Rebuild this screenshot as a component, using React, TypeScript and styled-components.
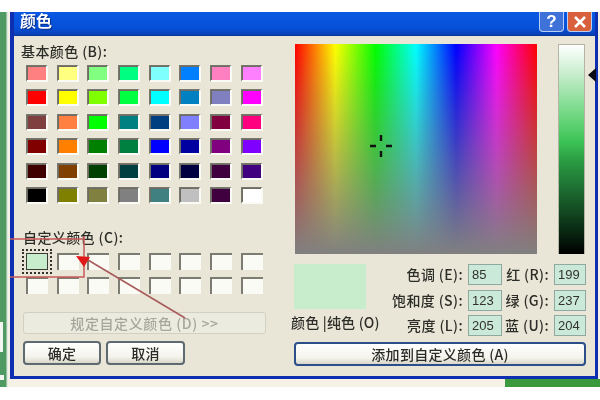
import React from 'react';
import styled, { createGlobalStyle } from 'styled-components';

const GlobalStyle = createGlobalStyle`
  html, body {
    margin: 0;
    padding: 0;
    background: #fff;
    overflow: hidden;
  }
  body {
    font-family: "Noto Sans CJK SC", "Liberation Sans", sans-serif;
  }
`;

const Page = styled.div`
  position: relative;
  width: 600px;
  height: 400px;
  padding-top: 12px;
  box-sizing: border-box;
  display: flex;
  align-items: flex-start;
  background: #fff;
  filter: blur(0.45px);
`;

const GreenStrip = styled.div`
  width: 8px;
  height: 375px;
  background:
    linear-gradient(#f2f5f0, #f2f5f0) 0 310px / 3px 30px no-repeat,
    linear-gradient(#f2f5f0, #f2f5f0) 0 363px / 4px 5px no-repeat,
    linear-gradient(90deg, #4f9a63 0 6px, #dfe8dc 7px);
`;

const Desktop = styled.div`
  width: 592px;
  height: 375px;
  display: flex;
  flex-direction: column;
  background: #f5f1e6;
`;

const Win = styled.div`
  width: 588px;
  height: 367px;
  margin-left: 2px;
  box-sizing: border-box;
  display: flex;
  flex-direction: column;
  border: solid #0e2fb0;
  border-width: 0 3px 3px 4px;
  background: #e9e6d8;
`;

const TitleBar = styled.div`
  height: 24px;
  flex: none;
  display: flex;
  justify-content: space-between;
  padding: 0 3px 0 6px;
  background: linear-gradient(180deg, #0a58e4 0%, #0650d8 70%, #0a3fb4 100%);
  border-bottom: 1px solid #0b37a0;
  box-sizing: border-box;
`;

const TitleText = styled.span`
  color: #fff;
  font-size: 16px;
  line-height: 16px;
  font-weight: 700;
  text-shadow: 1px 1px 1px #0a2c80;
`;

const TitleButtons = styled.div`
  display: flex;
  gap: 3px;
`;

const CaptionButton = styled.div<{ $close?: boolean }>`
  width: 25px;
  height: 20px;
  box-sizing: border-box;
  display: flex;
  align-items: center;
  justify-content: center;
  color: #fff;
  font: 700 17px "Liberation Sans", sans-serif;
  border: 1px solid #b9cdf0;
  border-top: none;
  border-radius: 0 0 4px 4px;
  background: ${(p) => (p.$close ? '#d8603c' : '#3f72d8')};
`;

const Body = styled.div`
  flex: 1;
  display: flex;
  padding: 6px 9px 0 7px;
  gap: 24px;
`;

const LeftColumn = styled.div`
  width: 249px;
  flex: none;
  display: flex;
  flex-direction: column;
`;

const SectionLabel = styled.div<{ $top?: number; $left?: number }>`
  font-size: 14px;
  font-weight: 500;
  letter-spacing: 0.4px;
  line-height: 18px;
  height: 18px;
  color: #2d2d28;
  white-space: pre;
  margin-top: ${(p) => p.$top ?? 0}px;
  margin-left: ${(p) => p.$left ?? 0}px;
`;

const SwatchGrid = styled.div<{ $top: number }>`
  display: grid;
  grid-template-columns: repeat(8, 22px);
  column-gap: 8.7px;
  row-gap: 7.4px;
  grid-auto-rows: 17px;
  margin: ${(p) => p.$top}px 0 0 5px;
`;

const Swatch = styled.div<{ $color: string; $selected?: boolean }>`
  box-sizing: border-box;
  background: ${(p) => p.$color};
  border-style: solid;
  border-width: 1px 2px 2px 1px;
  border-color: #77776c #fbfbf6 #fbfbf6 #77776c;
  box-shadow: inset 1px 1px 0 #6c6c64;
  ${(p) =>
    p.$selected &&
    `
    outline: 2px dotted #33332e;
    outline-offset: 2px;
    border-color: #3a3a36;
    border-width: 1px;
    box-shadow: none;
  `}
`;

const BlankSwatch = styled.div`
  box-sizing: border-box;
  background: #fbfbf6;
  border-style: solid;
  border-width: 2px 0 0 2px;
  border-color: #7c7c72;
`;

const WideButton = styled.div`
  margin: 18px 0 0 2px;
  width: 243px;
  height: 22px;
  box-sizing: border-box;
  border: 1px solid #d2d0c2;
  border-radius: 3px;
  background: #ecebe0;
  color: #a7a69a;
  font-size: 14px;
  font-weight: 500;
  letter-spacing: 0.6px;
  line-height: 20px;
  text-align: center;
  white-space: pre;
`;

const ButtonRow = styled.div`
  display: flex;
  gap: 5px;
  margin: 7px 0 0 2px;
`;

const DialogButton = styled.div<{ $width: number; $blue?: boolean }>`
  width: ${(p) => p.$width}px;
  height: 24px;
  box-sizing: border-box;
  border: 2px solid ${(p) => (p.$blue ? '#2c4f8c' : '#5e6a70')};
  border-radius: 4px;
  background: linear-gradient(180deg, #ffffff 0%, #f4f3ec 70%, #d8d6c8 100%);
  color: #2a2a26;
  font-size: 14px;
  font-weight: 500;
  letter-spacing: 0.3px;
  line-height: 20px;
  text-align: center;
  white-space: pre;
`;

const RightColumn = styled.div`
  flex: 1;
  display: flex;
  flex-direction: column;
`;

const PickerRow = styled.div`
  display: flex;
  gap: 21px;
  margin: 2px 0 0 1px;
`;

const Spectrum = styled.div`
  position: relative;
  width: 242px;
  height: 210px;
  background:
    linear-gradient(180deg, rgba(128, 128, 128, 0) 0%, rgba(128, 128, 128, 1) 100%),
    linear-gradient(90deg, #ff0000 0%, #ffff00 16.6%, #00ff00 33.3%, #00ffff 50%, #0000ff 66.6%, #ff00ff 83.3%, #ff0000 100%);
`;

const Crosshair = styled.svg`
  position: absolute;
  left: 74px;
  top: 90px;
`;

const LumWrap = styled.div`
  position: relative;
  width: 27px;
  height: 210px;
`;

const LumBar = styled.div`
  width: 27px;
  height: 210px;
  box-sizing: border-box;
  border: solid #b4b4a6;
  border-width: 1px 1px 0 1px;
  background: linear-gradient(180deg, #ffffff 0%, #c7edcc 14%, #7fdc8f 30%, #3cc455 46%, #2a9a42 56%, #1c6a30 70%, #0a2c14 88%, #000 100%);
`;

const LumArrow = styled.svg`
  position: absolute;
  left: 30px;
  top: 24px;
`;

const LowerRow = styled.div`
  display: flex;
  margin-top: 10px;
`;

const PreviewColumn = styled.div`
  width: 92px;
  flex: none;
  display: flex;
  flex-direction: column;
`;

const Preview = styled.div`
  width: 72px;
  height: 45px;
  background: #c7edcc;
`;

const PreviewLabel = styled.div`
  font-size: 14px;
  font-weight: 500;
  letter-spacing: 0.2px;
  line-height: 18px;
  margin: 4px 0 0 -3px;
  color: #2d2d28;
  white-space: pre;
`;

const FieldGrid = styled.div`
  display: grid;
  grid-template-columns: 82px 34px 52px 32px;
  grid-auto-rows: 21px;
  row-gap: 4.5px;
`;

const FieldLabel = styled.div`
  font-size: 14px;
  font-weight: 500;
  letter-spacing: 0.4px;
  line-height: 21px;
  color: #2d2d28;
  text-align: right;
  white-space: pre;
  padding-right: 5px;
`;

const Field = styled.div`
  box-sizing: border-box;
  border: 1px solid #8fa8a0;
  background: #cbe9d8;
  color: #33332e;
  font: 13px/19px "Liberation Sans", sans-serif;
  padding-left: 3px;
`;

const AddRow = styled.div`
  margin-top: 6px;
`;

const Annotation = styled.svg`
  position: absolute;
  left: 0;
  top: 0;
  pointer-events: none;
`;

const Footer = styled.div`
  flex: 1;
  display: flex;
  justify-content: flex-end;
`;

const FooterGreen = styled.div`
  width: 95px;
  background: #3c9a3e;
`;

const basicColors = [
  '#ff8080', '#ffff80', '#80ff80', '#00ff80', '#80ffff', '#0080ff', '#ff80c0', '#ff80ff',
  '#ff0000', '#ffff00', '#80ff00', '#00ff40', '#00ffff', '#0080c0', '#8080c0', '#ff00ff',
  '#804040', '#ff8040', '#00ff00', '#008080', '#004080', '#8080ff', '#800040', '#ff0080',
  '#800000', '#ff8000', '#008000', '#008040', '#0000ff', '#0000a0', '#800080', '#8000ff',
  '#400000', '#804000', '#004000', '#004040', '#000080', '#000040', '#400040', '#400080',
  '#000000', '#808000', '#808040', '#808080', '#408080', '#c0c0c0', '#400040', '#ffffff',
];

const fields = [
  ['色调 (E):', '85', '红 (R):', '199'],
  ['饱和度 (S):', '123', '绿 (G):', '237'],
  ['亮度 (L):', '205', '蓝 (U):', '204'],
];

const App: React.FC = () => {
  return (
    <>
      <GlobalStyle />
      <Page>
        <GreenStrip />
        <Desktop>
          <Win>
            <TitleBar>
              <TitleText>颜色</TitleText>
              <TitleButtons>
                <CaptionButton>?</CaptionButton>
                <CaptionButton $close>
                  <svg width="14" height="14" viewBox="0 0 14 14">
                    <path d="M2 2 L12 12 M12 2 L2 12" stroke="#fff" strokeWidth="2.6" />
                  </svg>
                </CaptionButton>
              </TitleButtons>
            </TitleBar>
            <Body>
              <LeftColumn>
                <SectionLabel>基本颜色 (B):</SectionLabel>
                <SwatchGrid $top={5}>
                  {basicColors.map((c, i) => (
                    <Swatch key={i} $color={c} />
                  ))}
                </SwatchGrid>
                <SectionLabel $top={24} $left={2}>自定义颜色 (C):</SectionLabel>
                <SwatchGrid $top={7}>
                  <Swatch $color="#c7edcc" $selected />
                  {Array.from({ length: 15 }).map((_, i) => (
                    <BlankSwatch key={i} />
                  ))}
                </SwatchGrid>
                <WideButton>规定自定义颜色 (D) &gt;&gt;</WideButton>
                <ButtonRow>
                  <DialogButton $width={78}>确定</DialogButton>
                  <DialogButton $width={79}>取消</DialogButton>
                </ButtonRow>
              </LeftColumn>
              <RightColumn>
                <PickerRow>
                  <Spectrum>
                    <Crosshair width="24" height="24" viewBox="0 0 24 24">
                      <path d="M12 1v6M12 17v6M1 12h6M17 12h6" stroke="#111" strokeWidth="2.4" />
                    </Crosshair>
                  </Spectrum>
                  <LumWrap>
                    <LumBar />
                    <LumArrow width="8" height="14" viewBox="0 0 8 14">
                      <path d="M0 7 L8 0 V14 Z" fill="#0a0a14" />
                    </LumArrow>
                  </LumWrap>
                </PickerRow>
                <LowerRow>
                  <PreviewColumn>
                    <Preview />
                    <PreviewLabel>颜色 |纯色 (O)</PreviewLabel>
                  </PreviewColumn>
                  <FieldGrid>
                    {fields.map((row) => (
                      <React.Fragment key={row[0]}>
                        <FieldLabel>{row[0]}</FieldLabel>
                        <Field>{row[1]}</Field>
                        <FieldLabel>{row[2]}</FieldLabel>
                        <Field>{row[3]}</Field>
                      </React.Fragment>
                    ))}
                  </FieldGrid>
                </LowerRow>
                <AddRow>
                  <DialogButton $width={292} $blue>添加到自定义颜色 (A)</DialogButton>
                </AddRow>
              </RightColumn>
            </Body>
          </Win>
          <Footer>
            <FooterGreen />
          </Footer>
        </Desktop>
        <Annotation width="600" height="400" viewBox="0 0 600 400">
          <path d="M10 239 H84 V277 H10 M84 236 V262" fill="none" stroke="#c85a5a" strokeWidth="1.5" />
          <path d="M185 318 L88 260" stroke="#a85a5a" strokeWidth="1.5" />
          <path d="M76 256 L90 257 L84 267 Z" fill="#e01818" />
        </Annotation>
      </Page>
    </>
  );
};

export default App;
